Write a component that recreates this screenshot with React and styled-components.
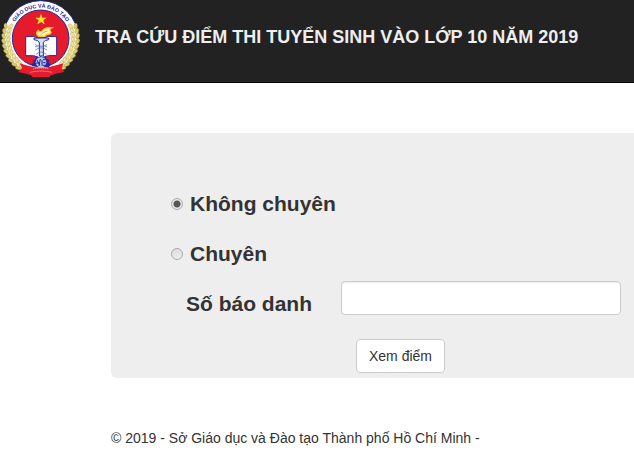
import { useState } from 'react';
import styled, { createGlobalStyle } from 'styled-components';

const CENTER = { x: 122, y: 115 };

// angles run clockwise from the top of the badge
const polar = (deg, radius) => {
  const rad = (deg * Math.PI) / 180;
  return {
    x: CENTER.x + radius * Math.sin(rad),
    y: CENTER.y - radius * Math.cos(rad),
  };
};

function Wheat({ side }) {
  const grains = [];
  for (let deg = 68; deg <= 142; deg += 8) {
    [97, 111].forEach((radius, i) => {
      const { x, y } = polar(side * (deg + i * 3), radius);
      const tilt = side * (deg + (i ? 28 : -28));
      grains.push(
        <ellipse
          key={`${deg}-${radius}`}
          cx={x}
          cy={y}
          rx="5"
          ry="9"
          fill={i ? '#dccb6c' : '#efe39a'}
          stroke="#a48d2b"
          strokeWidth="1"
          transform={`rotate(${tilt + 90} ${x} ${y})`}
        />
      );
    });
  }
  return <g>{grains}</g>;
}

function Emblem() {
  return (
    <Logo viewBox="0 0 252 246" role="img" aria-label="Giáo dục và đào tạo">
      <defs>
        <path id="motto" d="M 30 115 A 92 92 0 0 1 214 115" />
      </defs>
      <circle cx="122" cy="115" r="113" fill="#fff" stroke="#28259a" strokeWidth="3" />
      <circle cx="122" cy="115" r="85" fill="#e51b2b" stroke="#28259a" strokeWidth="3" />
      <MottoText>
        <textPath href="#motto" startOffset="50%" textAnchor="middle">
          GIÁO DỤC VÀ ĐÀO TẠO
        </textPath>
      </MottoText>
      <Wheat side={-1} />
      <Wheat side={1} />
      <path
        d="M123 41 L127 53 L140 53 L130 61 L134 73 L123 66 L112 73 L116 61 L106 53 L119 53 Z"
        fill="#ffe52c"
      />
      {/* open book */}
      <path
        d="M77 110 Q102 106 123 116 Q144 106 170 110 V167 Q143 164 123 174 Q103 164 77 167 Z"
        fill="#fff"
        stroke="#28259a"
        strokeWidth="3"
      />
      {/* flame */}
      <path
        d="M116 109 Q104 101 115 91 Q118 99 127 92 Q135 81 156 83 Q147 87 151 94 Q157 99 148 102 Q139 102 134 109 Z"
        fill="#fff6b8"
        stroke="#ffc51f"
        strokeWidth="4"
      />
      <path d="M121 106 Q128 96 143 92" fill="none" stroke="#ef6b28" strokeWidth="2" />
      {/* torch */}
      <path
        d="M102 114 H146 V119 Q134 120 130 127 V168 H118 V127 Q114 120 102 119 Z"
        fill="#d5ddf0"
        stroke="#28259a"
        strokeWidth="3"
      />
      <path
        d="M106 134 Q123 144 141 134 M106 150 Q123 137 141 150 M108 163 Q123 149 139 163 M105 140 H113 M134 140 H142"
        fill="none"
        stroke="#4260a8"
        strokeWidth="2"
      />
      {/* gear */}
      <path
        d="M97 199 L94 191 L101 189 L99 181 L106 179 L108 171 L116 174 L122 168 L129 174 L137 170 L140 178 L148 180 L146 188 L153 192 L147 201 Z"
        fill="#28259a"
      />
      <circle cx="123" cy="187" r="16" fill="#b8c6e9" />
      <path
        d="M111 180 L119 196 M121 177 L117 198 M126 180 V197 M129 179 H137 M128 188 H137 M128 196 H138 M108 189 H119"
        fill="none"
        stroke="#28259a"
        strokeWidth="3"
      />
      {/* ribbon */}
      <path
        d="M59 190 L84 197 Q123 209 162 197 L191 190 L185 205 L193 216 L165 221 Q157 227 151 226 L148 232 L98 232 L94 226 L78 221 L54 216 L66 204 Z"
        fill="#e51b2b"
      />
      <path
        d="M99 207 Q123 202 147 207 M91 217 Q123 209 155 217"
        fill="none"
        stroke="#f6a3a8"
        strokeWidth="3"
        strokeDasharray="4 2"
      />
    </Logo>
  );
}

function App() {
  const [type, setType] = useState('regular');
  const [candidate, setCandidate] = useState('');

  return (
    <>
      <GlobalStyle />
      <Navbar>
        <Emblem />
        <Title>TRA CỨU ĐIỂM THI TUYỂN SINH VÀO LỚP 10 NĂM 2019</Title>
      </Navbar>
      <Container>
        <SearchForm onSubmit={(e) => e.preventDefault()}>
          <RadioRow>
            <Radio
              id="regular"
              name="type"
              checked={type === 'regular'}
              onChange={() => setType('regular')}
            />
            <Label htmlFor="regular">Không chuyên</Label>
          </RadioRow>
          <RadioRow>
            <Radio
              id="special"
              name="type"
              checked={type === 'special'}
              onChange={() => setType('special')}
            />
            <Label htmlFor="special">Chuyên</Label>
          </RadioRow>
          <FieldRow>
            <Label htmlFor="candidate">Số báo danh</Label>
            <Field
              type="text"
              id="candidate"
              name="candidate"
              value={candidate}
              onChange={(e) => setCandidate(e.target.value)}
            />
          </FieldRow>
          <Actions>
            <Submit type="submit">Xem điểm</Submit>
          </Actions>
        </SearchForm>
        <Footer>© 2019 - Sở Giáo dục và Đào tạo Thành phố Hồ Chí Minh -</Footer>
      </Container>
    </>
  );
}

const GlobalStyle = createGlobalStyle`
  * {
    box-sizing: border-box;
  }

  body {
    margin: 0;
    background: #fff;
    color: #333;
    font-family: "Liberation Sans", Arial, sans-serif;
    font-size: 14px;
    line-height: 20px;
  }
`;

const Navbar = styled.header`
  display: flex;
  gap: 11px;
  background: #222;
  border-bottom: 1px solid #080808;
`;

const Logo = styled.svg`
  flex: none;
  width: 84px;
  height: 82px;
`;

const MottoText = styled.text`
  fill: #28259a;
  font-family: "Liberation Sans", sans-serif;
  font-size: 16px;
  font-weight: bold;
`;

const Title = styled.h1`
  margin: 0;
  padding-top: 27px;
  color: #eee;
  font-size: 18px;
  line-height: 20px;
`;

const Container = styled.main`
  padding: 50px 0 0 111px;
`;

const SearchForm = styled.form`
  padding: 46px 13px 5px 60px;
  background: #eee;
  border-radius: 6px 0 0 6px;
`;

const RadioRow = styled.div`
  display: flex;
  align-items: center;
  gap: 7px;
  height: 50px;
`;

const Radio = styled.input.attrs({ type: 'radio' })`
  appearance: none;
  width: 12px;
  height: 12px;
  margin: 0;
  border: 1px solid #aaa;
  border-radius: 50%;
  background: ${(props) =>
    props.checked
      ? 'radial-gradient(circle, #555 0 3px, #e8e8e8 4px)'
      : 'linear-gradient(#ddd, #eee)'};
`;

const Label = styled.label`
  font-size: 21px;
  font-weight: bold;
  line-height: 30px;
`;

const FieldRow = styled.div`
  display: flex;
  justify-content: space-between;
  align-items: flex-end;
  padding: 2px 0 0 15px;
`;

const Field = styled.input`
  width: 280px;
  height: 34px;
  margin-bottom: 4px;
  padding: 6px 12px;
  border: 1px solid #ccc;
  border-radius: 4px;
  background: #fff;
  box-shadow: inset 0 1px 1px rgba(0, 0, 0, 0.08);
  color: #555;
  font: inherit;
`;

const Actions = styled.div`
  padding: 20px 0 0 185px;
`;

const Submit = styled.button`
  display: block;
  height: 34px;
  padding: 6px 12px;
  border: 1px solid #ccc;
  border-radius: 4px;
  background: #fff;
  color: #333;
  font: inherit;
`;

const Footer = styled.footer`
  padding-top: 50px;
`;

export default App;
